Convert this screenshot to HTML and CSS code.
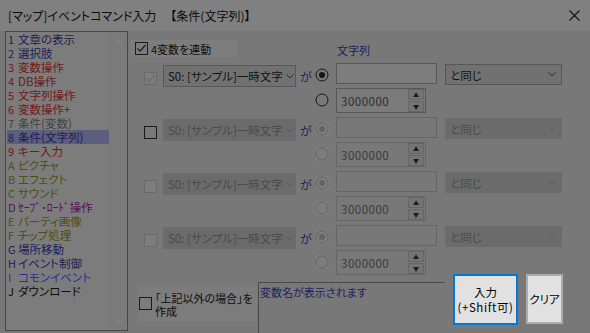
FILE: index.html
```html
<!DOCTYPE html>
<html lang="ja">
<head>
    <meta charset="UTF-8">
    <meta name="viewport" content="width=device-width, initial-scale=1.0">
    <title>[マップ]イベントコマンド入力</title>
    <link rel="stylesheet" href="styles.css">
</head>
<body>
    <div class="dialog">
        <div class="titlebar">
            <span class="title">[マップ]イベントコマンド入力</span>
            <span class="title-sub">【条件(文字列)】</span>
            <span class="close">
                <svg width="11" height="11" viewBox="0 0 11 11"><path d="M0.5 0.5L10.5 10.5M10.5 0.5L0.5 10.5" stroke="#111" stroke-width="1.1"/></svg>
            </span>
        </div>

        <div class="main">
            <div class="cmd-list">
                <ul class="cmd-items">
                    <li class="c-navy"><span class="no">1</span>文章の表示</li>
                    <li class="c-navy"><span class="no">2</span>選択肢</li>
                    <li class="c-red"><span class="no">3</span>変数操作</li>
                    <li class="c-red"><span class="no">4</span>DB操作</li>
                    <li class="c-red"><span class="no">5</span>文字列操作</li>
                    <li class="c-red"><span class="no">6</span>変数操作+</li>
                    <li class="c-gray"><span class="no">7</span>条件(変数)</li>
                    <li class="c-navy sel"><span class="no">8</span>条件(文字列)</li>
                    <li class="c-red"><span class="no">9</span>キー入力</li>
                    <li class="c-olive"><span class="no">A</span>ピクチャ</li>
                    <li class="c-olive"><span class="no">B</span>エフェクト</li>
                    <li class="c-olive"><span class="no">C</span>サウンド</li>
                    <li class="c-purple"><span class="no">D</span>ｾｰﾌﾞ･ﾛｰﾄﾞ操作</li>
                    <li class="c-olive"><span class="no">E</span>パーティ画像</li>
                    <li class="c-olive"><span class="no">F</span>チップ処理</li>
                    <li class="c-navy"><span class="no">G</span>場所移動</li>
                    <li class="c-navy"><span class="no">H</span>イベント制御</li>
                    <li class="c-blue"><span class="no">I</span>コモンイベント</li>
                    <li class="c-black"><span class="no">J</span>ダウンロード</li>
                </ul>
                <div class="scroll">
                    <svg width="8" height="5" viewBox="0 0 8 5"><path d="M0.5 4.5L4 1L7.5 4.5" fill="none" stroke="#8a8a8a"/></svg>
                    <svg width="8" height="5" viewBox="0 0 8 5"><path d="M0.5 0.5L4 4L7.5 0.5" fill="none" stroke="#8a8a8a"/></svg>
                </div>
            </div>

            <div class="panel">
                <div class="panel-head">
                    <label class="link-box">
                        <span class="chk"><svg width="11" height="11" viewBox="0 0 11 11"><path d="M1.5 5.5L4.2 8.2L9.5 2" fill="none" stroke="currentColor" stroke-width="1.2"/></svg></span>
                        4変数を連動
                    </label>
                    <span class="col-label">文字列</span>
                </div>

                <div class="conds">
                    <div class="cond">
                        <span class="chk dis"><svg width="11" height="11" viewBox="0 0 11 11"><path d="M1.5 5.5L4.2 8.2L9.5 2" fill="none" stroke="currentColor" stroke-width="1.2"/></svg></span>
                        <div class="combo var"><span class="combo-text">S0: [サンプル]一時文字</span><svg class="chev" width="8" height="5" viewBox="0 0 8 5"><path d="M0.5 0.5L4 4L7.5 0.5" fill="none" stroke="currentColor"/></svg></div>
                        <span class="ga">が</span>
                        <svg class="radio" width="14" height="14" viewBox="0 0 14 14"><circle cx="7" cy="7" r="6" fill="none" stroke="currentColor"/><circle cx="7" cy="7" r="3" fill="currentColor"/></svg>
                        <div class="edit"></div>
                        <div class="combo op"><span class="combo-text">と同じ</span><svg class="chev" width="8" height="5" viewBox="0 0 8 5"><path d="M0.5 0.5L4 4L7.5 0.5" fill="none" stroke="currentColor"/></svg></div>
                        <svg class="radio lower" width="14" height="14" viewBox="0 0 14 14"><circle cx="7" cy="7" r="6" fill="none" stroke="currentColor"/></svg>
                        <div class="spin">3000000<span class="spin-btns"><span class="sb">&#9650;</span><span class="sb">&#9660;</span></span></div>
                    </div>

                    <div class="cond off">
                        <span class="chk"></span>
                        <div class="combo var"><span class="combo-text">S0: [サンプル]一時文字</span><svg class="chev" width="8" height="5" viewBox="0 0 8 5"><path d="M0.5 0.5L4 4L7.5 0.5" fill="none" stroke="currentColor"/></svg></div>
                        <span class="ga">が</span>
                        <svg class="radio" width="14" height="14" viewBox="0 0 14 14"><circle cx="7" cy="7" r="6" fill="none" stroke="currentColor"/><circle cx="7" cy="7" r="3" fill="currentColor"/></svg>
                        <div class="edit"></div>
                        <div class="combo op"><span class="combo-text">と同じ</span><svg class="chev" width="8" height="5" viewBox="0 0 8 5"><path d="M0.5 0.5L4 4L7.5 0.5" fill="none" stroke="currentColor"/></svg></div>
                        <svg class="radio lower" width="14" height="14" viewBox="0 0 14 14"><circle cx="7" cy="7" r="6" fill="none" stroke="currentColor"/></svg>
                        <div class="spin">3000000<span class="spin-btns"><span class="sb">&#9650;</span><span class="sb">&#9660;</span></span></div>
                    </div>

                    <div class="cond off">
                        <span class="chk dis"></span>
                        <div class="combo var"><span class="combo-text">S0: [サンプル]一時文字</span><svg class="chev" width="8" height="5" viewBox="0 0 8 5"><path d="M0.5 0.5L4 4L7.5 0.5" fill="none" stroke="currentColor"/></svg></div>
                        <span class="ga">が</span>
                        <svg class="radio" width="14" height="14" viewBox="0 0 14 14"><circle cx="7" cy="7" r="6" fill="none" stroke="currentColor"/><circle cx="7" cy="7" r="3" fill="currentColor"/></svg>
                        <div class="edit"></div>
                        <div class="combo op"><span class="combo-text">と同じ</span><svg class="chev" width="8" height="5" viewBox="0 0 8 5"><path d="M0.5 0.5L4 4L7.5 0.5" fill="none" stroke="currentColor"/></svg></div>
                        <svg class="radio lower" width="14" height="14" viewBox="0 0 14 14"><circle cx="7" cy="7" r="6" fill="none" stroke="currentColor"/></svg>
                        <div class="spin">3000000<span class="spin-btns"><span class="sb">&#9650;</span><span class="sb">&#9660;</span></span></div>
                    </div>

                    <div class="cond off">
                        <span class="chk dis"></span>
                        <div class="combo var"><span class="combo-text">S0: [サンプル]一時文字</span><svg class="chev" width="8" height="5" viewBox="0 0 8 5"><path d="M0.5 0.5L4 4L7.5 0.5" fill="none" stroke="currentColor"/></svg></div>
                        <span class="ga">が</span>
                        <svg class="radio" width="14" height="14" viewBox="0 0 14 14"><circle cx="7" cy="7" r="6" fill="none" stroke="currentColor"/><circle cx="7" cy="7" r="3" fill="currentColor"/></svg>
                        <div class="edit"></div>
                        <div class="combo op"><span class="combo-text">と同じ</span><svg class="chev" width="8" height="5" viewBox="0 0 8 5"><path d="M0.5 0.5L4 4L7.5 0.5" fill="none" stroke="currentColor"/></svg></div>
                        <svg class="radio lower" width="14" height="14" viewBox="0 0 14 14"><circle cx="7" cy="7" r="6" fill="none" stroke="currentColor"/></svg>
                        <div class="spin">3000000<span class="spin-btns"><span class="sb">&#9650;</span><span class="sb">&#9660;</span></span></div>
                    </div>
                </div>

                <div class="foot">
                    <label class="else-box">
                        <span class="chk"></span>
                        <span class="else-text">「上記以外の場合」を<br>作成</span>
                    </label>
                    <div class="memo">変数名が表示されます</div>
                    <button class="btn btn-ok">入力<br><span class="shift">(+Shift可)</span></button>
                    <button class="btn btn-clear">クリア</button>
                </div>
            </div>
        </div>
    </div>
</body>
</html>
```

FILE: styles.css
```css
body {
    margin: 0;
    background: #787878;
    font-family: "Noto Sans CJK JP", "Noto Sans", sans-serif;
    font-size: 11px;
    font-feature-settings: "palt";
    color: #0c0c0c;
}

.dialog {
    width: 590px;
    height: 333px;
    overflow: hidden;
}

/* title bar */
.titlebar {
    height: 31px;
    background: #808080;
    display: flex;
    align-items: center;
    padding-left: 8px;
    box-sizing: border-box;
    font-size: 12px;
}

.title-sub {
    margin-left: 14px;
}

.close {
    margin-left: auto;
    margin-right: 10px;
    display: flex;
}

.main {
    display: flex;
    height: 302px;
}

/* command list */
.cmd-list {
    margin-left: 5px;
    width: 123px;
    height: 300px;
    box-sizing: border-box;
    border: 1px solid #474747;
    background: #7c7c7c;
    display: flex;
}

.cmd-items {
    list-style: none;
    margin: 0;
    padding: 0 0 0 1px;
    width: 102px;
}

.cmd-items li {
    height: 14px;
    line-height: 14px;
    padding-left: 1px;
    white-space: nowrap;
    font-size: 11.5px;
}

.cmd-items .no {
    display: inline-block;
    width: 10px;
    font-size: 11px;
}

.cmd-items li.sel {
    background: #5d5d7e;
}

.c-navy { color: #1c1c52; }
.c-red { color: #701818; }
.c-gray { color: #424242; }
.c-olive { color: #4e4e14; }
.c-purple { color: #5a0e56; }
.c-blue { color: #2c2c98; }
.c-black { color: #0c0c0c; }

.scroll {
    width: 17px;
    margin-left: auto;
    background: #7a7a7a;
    display: flex;
    flex-direction: column;
    justify-content: space-between;
    align-items: center;
    padding: 8px 0 6px;
    box-sizing: border-box;
}

/* right panel */
.panel {
    margin-left: 3px;
    flex: 1;
}

.panel-head {
    margin-top: 9px;
    height: 17px;
    display: flex;
    align-items: center;
}

.link-box {
    width: 106px;
    height: 17px;
    background: #7d7d7d;
    display: flex;
    align-items: center;
    gap: 3px;
    padding-left: 4px;
    box-sizing: border-box;
}

.col-label {
    margin-left: 100px;
    padding-top: 2px;
    color: #1e1e58;
}

.chk {
    width: 13px;
    height: 13px;
    box-sizing: border-box;
    border: 1px solid #1a1a1a;
    color: #1a1a1a;
    display: flex;
    align-items: center;
    justify-content: center;
    flex-shrink: 0;
}

.chk.dis {
    border-color: #6a6a6a;
    color: #6a6a6a;
    background: #7d7d7d;
}

.conds {
    margin-top: 6px;
    display: flex;
    flex-direction: column;
    gap: 4px;
}

.cond {
    display: grid;
    grid-template-columns: 19px 137px 15px 21px 109px 117px;
    grid-template-rows: 21px 25px;
    row-gap: 4px;
    margin-left: 13px;
}

.cond .chk {
    margin-top: 9px;
}

.combo {
    box-sizing: border-box;
    height: 21px;
    background: #717171;
    border: 1px solid #575757;
    display: flex;
    align-items: center;
    justify-content: space-between;
    padding: 0 5px 0 4px;
    white-space: nowrap;
    overflow: hidden;
    color: #111;
    font-size: 11.5px;
}

.combo .chev {
    flex-shrink: 0;
    margin-left: 3px;
    color: #2a2a2a;
}

.combo.var {
    width: 133px;
    margin-top: 2px;
    height: 22px;
}

.combo.op {
    width: 117px;
    margin-top: 1px;
}

.ga {
    margin-top: 7px;
    line-height: 14px;
    font-size: 12px;
    color: #1e1e60;
}

.radio {
    margin-top: 5px;
    color: #161616;
}

.radio.lower {
    grid-row: 2;
    grid-column: 4;
    margin-top: 5px;
}

.edit {
    width: 101px;
    height: 21px;
    box-sizing: border-box;
    border: 1px solid #575757;
    background: #7d7d7d;
}

.spin {
    grid-row: 2;
    grid-column: 5;
    width: 90px;
    height: 25px;
    box-sizing: border-box;
    border: 1px solid #575757;
    background: #7b7b7b;
    display: flex;
    align-items: center;
    padding-left: 4px;
    color: #2c2c2c;
    font-size: 11.5px;
    letter-spacing: 0.5px;
}

.spin-btns {
    margin-left: auto;
    width: 16px;
    height: 23px;
    display: flex;
    flex-direction: column;
    gap: 1px;
    padding: 0 1px 0 0;
    letter-spacing: 0;
}

.sb {
    flex: 1;
    box-sizing: border-box;
    border: 1px solid #666;
    background: #747474;
    font-size: 6px;
    line-height: 9px;
    text-align: center;
    color: #1a1a1a;
}

/* disabled rows */
.cond.off .combo {
    background: #6b6b6b;
    border-color: #6b6b6b;
    color: #4a4a4a;
}

.cond.off .combo .chev {
    color: #5a5a5a;
}

.cond.off .radio {
    color: #646464;
    background: #7d7d7d;
}

.cond.off .edit {
    border-color: #666;
    background: #787878;
}

.cond.off .spin {
    border-color: #666;
    background: #787878;
    color: #3a3a3a;
}

/* bottom */
.foot {
    margin-top: -1px;
    padding-left: 7px;
    display: flex;
    align-items: flex-start;
}

.else-box {
    margin-top: 11px;
    width: 119px;
    height: 37px;
    background: #7c7c7c;
    display: flex;
    align-items: flex-start;
    gap: 3px;
    padding-left: 1px;
    box-sizing: border-box;
}

.else-box .chk {
    margin-top: 12px;
}

.else-text {
    padding-top: 7px;
    line-height: 13px;
    white-space: nowrap;
}

.memo {
    margin-top: 8px;
    margin-left: 1px;
    width: 187px;
    height: 60px;
    box-sizing: border-box;
    border-top: 1px solid #4a4a4a;
    border-left: 1px solid #4a4a4a;
    padding: 2px 1px;
    line-height: 14px;
    color: #1e1e60;
}

.btn {
    font-family: inherit;
    font-size: 11.5px;
    font-feature-settings: "palt";
    background: #e1e1e1;
    color: #000;
    line-height: 15px;
    padding: 0;
    box-sizing: border-box;
}

.btn .shift {
    letter-spacing: 0.6px;
}

.btn-ok {
    margin-left: 8px;
    width: 65px;
    height: 51px;
    border: 2px solid #0078d7;
}

.btn-clear {
    margin-left: 8px;
    width: 37px;
    height: 50px;
    border: 2px solid #acacac;
}
```
